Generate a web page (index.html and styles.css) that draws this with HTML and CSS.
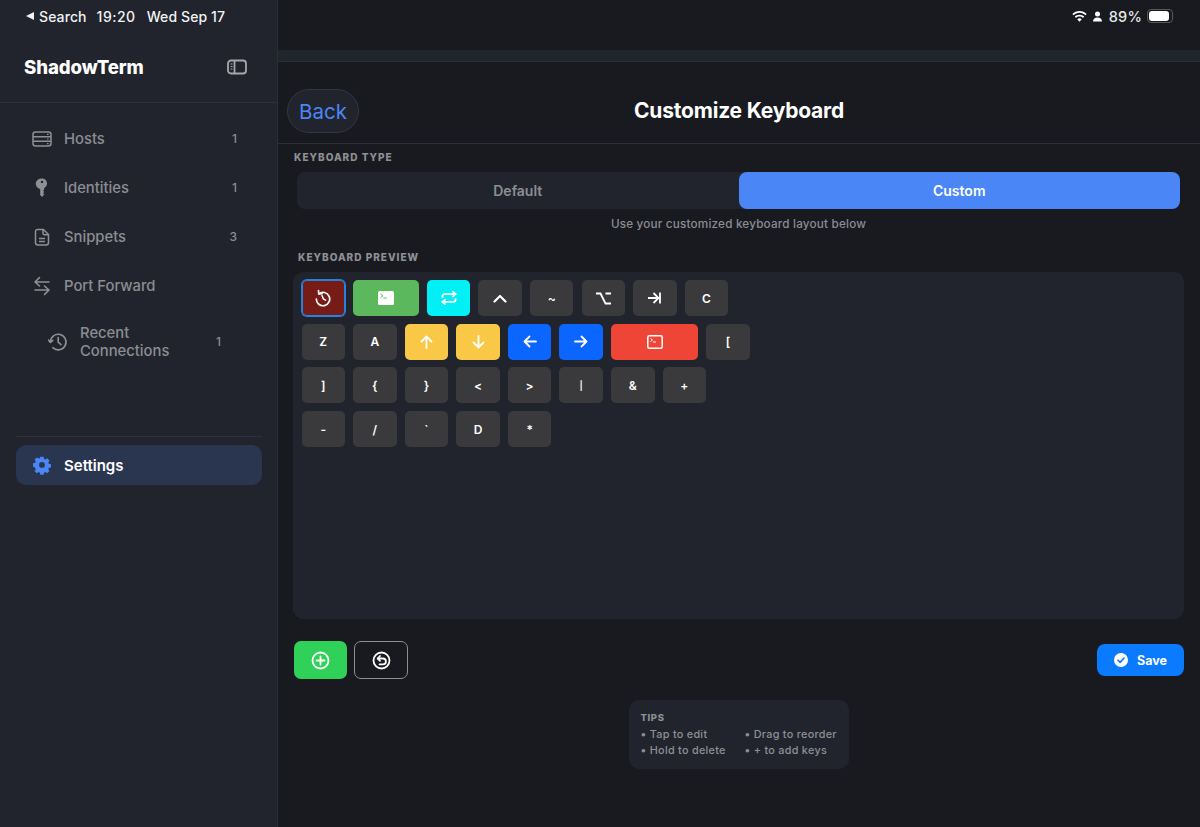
FILE: index.html
```html
<!DOCTYPE html>
<html lang="en">
<head>
  <meta charset="UTF-8" />
  <meta name="viewport" content="width=device-width, initial-scale=1.0" />
  <title>ShadowTerm - Customize Keyboard</title>
  <link rel="stylesheet" href="styles.css">
</head>
<body>
  <div class="app">
    <aside class="sidebar">
      <div class="status-left">
        <span class="back-tri"></span><span>Search</span><span class="clock">19:20</span><span>Wed Sep 17</span>
      </div>
      <div class="brand">
        <span class="brand-name">ShadowTerm</span>
        <svg class="brand-toggle" width="20" height="16" viewBox="0 0 20 16" fill="none" stroke="#a5a7ab" stroke-width="1.8">
          <rect x="1" y="1.5" width="18" height="13" rx="3"/>
          <path d="M7.5 1.5v13"/>
          <path d="M3.5 5h2M3.5 7.5h2M3.5 10h2" stroke-width="1.2"/>
        </svg>
      </div>

      <nav class="nav">
        <div class="nav-item">
          <svg class="nav-icon" width="20" height="20" viewBox="0 0 20 20" fill="none" stroke="#8e9094" stroke-width="1.5">
            <rect x="1" y="3" width="18" height="14" rx="2.5"/>
            <path d="M1 7.7h18M1 12.3h18"/>
            <path d="M15 5.4h1.6M15 10h1.6M15 14.7h1.6" stroke-width="1.2"/>
          </svg>
          <span class="nav-label">Hosts</span><span class="nav-count">1</span>
        </div>
        <div class="nav-item">
          <svg class="nav-icon" width="20" height="20" viewBox="0 0 20 20" fill="#8e9094">
            <path d="M10 0.5a5 5 0 0 1 2.2 9.5v1.6l-1.1 1.2 1.1 1.3-1.1 1.2 1.1 1.2-2.2 2.4-1.8-1.8v-6.1A5 5 0 0 1 10 0.5zm0 2.2a1.2 1.2 0 1 0 0 2.4 1.2 1.2 0 0 0 0-2.4z" fill-rule="evenodd"/>
          </svg>
          <span class="nav-label">Identities</span><span class="nav-count">1</span>
        </div>
        <div class="nav-item">
          <svg class="nav-icon" width="20" height="20" viewBox="0 0 20 20" fill="none" stroke="#8e9094" stroke-width="1.5" stroke-linejoin="round">
            <path d="M5.5 2.5h6l5 5v8a2.5 2.5 0 0 1-2.5 2.5H6a2.5 2.5 0 0 1-2.5-2.5v-11a2 2 0 0 1 2-2z"/>
            <path d="M11 2.8v3.4a1.5 1.5 0 0 0 1.5 1.5h3.7"/>
            <path d="M7 11.5h6M7 14.5h6" stroke-width="1.3"/>
          </svg>
          <span class="nav-label">Snippets</span><span class="nav-count">3</span>
        </div>
        <div class="nav-item">
          <svg class="nav-icon" width="20" height="20" viewBox="0 0 20 20" fill="none" stroke="#8e9094" stroke-width="1.6" stroke-linecap="round" stroke-linejoin="round">
            <path d="M17 6H3.5M7.5 1.5L3 6l4.5 4"/>
            <path d="M3 14h13.5M12.5 10l4.5 4-4.5 4.5"/>
          </svg>
          <span class="nav-label">Port Forward</span>
        </div>
        <div class="nav-item nav-recent">
          <svg class="nav-icon" width="20" height="20" viewBox="0 0 20 20" fill="none" stroke="#8e9094" stroke-width="1.6" stroke-linecap="round" stroke-linejoin="round">
            <path d="M2.4 10a7.8 7.8 0 1 1 2.4 5.7"/>
            <path d="M0.5 8l2 2.4L4.8 8.3"/>
            <path d="M10.2 5.5v4.7l2.8 2.4"/>
          </svg>
          <span class="nav-label">Recent Connections</span><span class="nav-count">1</span>
        </div>
      </nav>

      <div class="side-foot">
        <div class="nav-item nav-active">
          <svg class="nav-icon" width="20" height="20" viewBox="0 0 20 20">
            <path fill="#4a86f5" fill-rule="evenodd" d="M8.2 1h3.6l.5 2.4 1.4.6 2.1-1.3 2.5 2.5-1.3 2.1.6 1.4 2.4.5v3.6l-2.4.5-.6 1.4 1.3 2.1-2.5 2.5-2.1-1.3-1.4.6-.5 2.4H8.2l-.5-2.4-1.4-.6-2.1 1.3-2.5-2.5 1.3-2.1-.6-1.4L0 11.8V8.2l2.4-.5.6-1.4L1.7 4.2l2.5-2.5 2.1 1.3 1.4-.6zM10 6.8a3.2 3.2 0 1 0 0 6.4 3.2 3.2 0 0 0 0-6.4z" transform="translate(1 .9) scale(.9)"/>
          </svg>
          <span class="nav-label">Settings</span>
        </div>
      </div>
    </aside>

    <main class="main">
      <div class="status-right">
        <svg width="15" height="11" viewBox="0 0 15 11" fill="#fff">
          <path d="M7.5 0C4.7 0 2.2 1.1.4 2.9l1.2 1.3C3.1 2.7 5.2 1.8 7.5 1.8s4.4.9 5.9 2.4l1.2-1.3C12.8 1.1 10.3 0 7.5 0z"/>
          <path d="M7.5 3.7c-1.8 0-3.5.7-4.7 1.9l1.2 1.3c.9-.9 2.1-1.4 3.5-1.400s2.600.5 3.500 1.400l1.200-1.300c-1.200-1.200-2.900-1.900-4.700-1.900z"/>
          <path d="M7.5 7.3c-.9 0-1.700.4-2.300 1L7.5 10.800l2.300-2.500c-.6-.6-1.400-1-2.300-1z"/>
        </svg>
        <svg width="11" height="11" viewBox="0 0 11 11" fill="#fff">
          <circle cx="5.5" cy="3" r="2.5"/>
          <path d="M1 10.5c0-2.500 2-4 4.500-4s4.500 1.500 4.500 4z"/>
        </svg>
        <span class="battery-pct">89%</span>
        <span class="battery"><span class="battery-fill"></span></span>
      </div>
      <div class="band"></div>

      <header class="page-head">
        <button class="back-btn">Back</button>
        <h1>Customize Keyboard</h1>
      </header>

      <section class="content">
        <div class="section-label">KEYBOARD TYPE</div>
        <div class="segment">
          <div class="seg-item">Default</div>
          <div class="seg-item seg-on">Custom</div>
        </div>
        <p class="hint">Use your customized keyboard layout below</p>

        <div class="section-label label-preview">KEYBOARD PREVIEW</div>
        <div class="preview">
          <div class="key-row">
            <div class="key key-undo">
              <svg width="18" height="18" viewBox="0 0 18 18" fill="none" stroke="#fff" stroke-width="1.7" stroke-linecap="round" stroke-linejoin="round">
                <path d="M4.8 4.800A6.700 6.700 0 1 1 2.300 10"/>
                <path d="M4.500 1.500l.3 3.300 3.200-.2"/>
                <path d="M8 6.500l1.300 3.300 2.300 1.400" stroke-width="1.5"/>
              </svg>
            </div>
            <div class="key key-wide key-green">
              <svg width="16" height="14" viewBox="0 0 16 14">
                <rect x="0" y="0" width="16" height="14" rx="1.5" fill="#fff"/>
                <path d="M2.500 3l2.500 1.800L2.500 6.600" fill="none" stroke="#5cb85c" stroke-width="1"/>
                <path d="M5.500 7h3" stroke="#5cb85c" stroke-width="1"/>
              </svg>
            </div>
            <div class="key key-cyan">
              <svg width="16" height="14" viewBox="0 0 18 16" fill="none" stroke="#fff" stroke-width="2" stroke-linecap="round" stroke-linejoin="round">
                <path d="M1.500 7V6a2.500 2.500 0 0 1 2.500-2.500h12.500"/>
                <path d="M13.500 .8l3 2.700-3 2.700"/>
                <path d="M16.500 9v1a2.500 2.500 0 0 1-2.500 2.500H1.500"/>
                <path d="M4.500 9.800l-3 2.700 3 2.700"/>
              </svg>
            </div>
            <div class="key">
              <svg width="14" height="9" viewBox="0 0 14 9" fill="none" stroke="#fff" stroke-width="2.2" stroke-linecap="round" stroke-linejoin="round"><path d="M1.500 7.500L7 2l5.500 5.500"/></svg>
            </div>
            <div class="key">~</div>
            <div class="key">
              <svg width="15" height="13" viewBox="0 0 15 13" fill="none" stroke="#fff" stroke-width="1.8"><path d="M0 1.500h4.500l5 10H15M9.500 1.500H15"/></svg>
            </div>
            <div class="key">
              <svg width="13" height="12" viewBox="0 0 13 12" fill="none" stroke="#fff" stroke-width="1.8"><path d="M0 6h10M5.500 1l5 5-5 5M12 0.500v11"/></svg>
            </div>
            <div class="key">C</div>
          </div>
          <div class="key-row">
            <div class="key">Z</div>
            <div class="key">A</div>
            <div class="key key-yellow">
              <svg width="13" height="14" viewBox="0 0 13 14" fill="none" stroke="#fff" stroke-width="1.8" stroke-linecap="round" stroke-linejoin="round"><path d="M6.500 13V1.500M1.500 6.500l5-5 5 5"/></svg>
            </div>
            <div class="key key-yellow">
              <svg width="13" height="14" viewBox="0 0 13 14" fill="none" stroke="#fff" stroke-width="1.8" stroke-linecap="round" stroke-linejoin="round"><path d="M6.500 1v11.500M1.500 7.500l5 5 5-5"/></svg>
            </div>
            <div class="key key-blue">
              <svg width="14" height="13" viewBox="0 0 14 13" fill="none" stroke="#fff" stroke-width="1.8" stroke-linecap="round" stroke-linejoin="round"><path d="M13 6.500H1.500M6.500 1.500l-5 5 5 5"/></svg>
            </div>
            <div class="key key-blue">
              <svg width="14" height="13" viewBox="0 0 14 13" fill="none" stroke="#fff" stroke-width="1.8" stroke-linecap="round" stroke-linejoin="round"><path d="M1 6.500h11.500M7.500 1.500l5 5-5 5"/></svg>
            </div>
            <div class="key key-red">
              <svg width="16" height="14" viewBox="0 0 16 14" fill="none" stroke="#fff">
                <rect x=".8" y=".8" width="14.4" height="12.4" rx="1.5" stroke-width="1.5"/>
                <path d="M3.500 3.500l2 1.500-2 1.500M6 7h3" stroke-width="1"/>
              </svg>
            </div>
            <div class="key">[</div>
          </div>
          <div class="key-row">
            <div class="key">]</div>
            <div class="key">{</div>
            <div class="key">}</div>
            <div class="key">&lt;</div>
            <div class="key">&gt;</div>
            <div class="key key-pipe">|</div>
            <div class="key">&amp;</div>
            <div class="key">+</div>
          </div>
          <div class="key-row">
            <div class="key">-</div>
            <div class="key">/</div>
            <div class="key">`</div>
            <div class="key">D</div>
            <div class="key">*</div>
          </div>
        </div>

        <div class="actions">
          <button class="act-btn act-add">
            <svg width="19" height="19" viewBox="0 0 19 19" fill="none" stroke="#fff" stroke-width="1.8" stroke-linecap="round"><circle cx="9.5" cy="9.5" r="8"/><path d="M9.500 5.500v8M5.500 9.500h8"/></svg>
          </button>
          <button class="act-btn act-reset">
            <svg width="19" height="19" viewBox="0 0 19 19" fill="none" stroke="#fff" stroke-width="1.8" stroke-linecap="round" stroke-linejoin="round"><circle cx="9.5" cy="9.5" r="8"/><path d="M6 7.500h5a2.900 2.900 0 0 1 0 5.800H7.500"/><path d="M8 5L5.700 7.500 8 9.800"/></svg>
          </button>
          <button class="save-btn">
            <svg width="14" height="14" viewBox="0 0 14 14"><circle cx="7" cy="7" r="7" fill="#fff"/><path d="M4 7.300l2.100 2.100L10 5" fill="none" stroke="#0a7aff" stroke-width="1.6" stroke-linecap="round" stroke-linejoin="round"/></svg>
            Save
          </button>
        </div>

        <div class="tips">
          <div class="tips-title">TIPS</div>
          <div class="tips-grid">
            <span>• Tap to edit</span><span>• Drag to reorder</span>
            <span>• Hold to delete</span><span>• + to add keys</span>
          </div>
        </div>
      </section>
    </main>
  </div>
</body>
</html>
```

FILE: styles.css
```css
*{box-sizing:border-box}
html,body{margin:0;height:100%}
body{font-family:Inter,"Liberation Sans",sans-serif;background:#181a20;color:#fff;overflow:hidden}
button{font-family:inherit;cursor:pointer}

.app{display:flex;height:827px}

.sidebar{width:278px;flex:none;background:#21242d;border-right:1px solid #2b2e36;display:flex;flex-direction:column}
.status-left{height:32px;padding:0 0 0 26px;display:flex;align-items:center;font-size:14px;font-weight:500;color:#f2f2f3;letter-spacing:.1px}
.back-tri{width:0;height:0;border-top:4px solid transparent;border-bottom:4px solid transparent;border-right:8px solid #f2f2f3;margin-right:5px}
.clock{margin:0 11px 0 10px;letter-spacing:.5px}
.brand{height:71px;padding:0 30px 0 24px;display:flex;align-items:center;justify-content:space-between;border-bottom:1px solid #2d3039}
.brand-name{font-size:18.6px;font-weight:800;letter-spacing:-.1px}
.brand-toggle{display:block}

.nav{height:333px;padding-top:11px}
.nav-item{height:49px;margin:0 16px;padding:0 24px 0 16px;display:flex;align-items:center;font-size:14.8px;font-weight:500;color:#8b8d92}
.nav-icon{flex:none;margin-right:12px}
.nav-label{flex:1}
.nav-count{font-size:12px;color:#8b8d92}
.nav-recent{height:56px;margin:4px 32px 0;line-height:18px}

.side-foot{margin:0 15px 0 16px;border-top:1px solid #2d3039;padding-top:8px}
.nav-active{margin:0;height:40px;background:#2a3550;border-radius:10px;color:#fff;font-size:15px;font-weight:600}

.main{flex:1;min-width:0;display:flex;flex-direction:column}
.status-right{height:32px;padding:0 27px 0 0;display:flex;align-items:center;justify-content:flex-end;gap:5px}
.battery-pct{font-size:14.5px;font-weight:500;color:#e8e8ea;letter-spacing:.2px;margin-left:1px}
.battery{width:26px;height:14px;border:1px solid #55575b;border-radius:4px;padding:1px}
.battery-fill{display:block;width:92%;height:100%;background:#fff;border-radius:3px}
.band{height:12px;margin-top:18px;background:#21252e;border-bottom:1px solid #2d3039}

.page-head{height:82px;position:relative;display:flex;align-items:center;justify-content:center;border-bottom:1px solid #2d2f36;padding-top:16px}
.page-head h1{margin:0;font-size:21px;font-weight:700;letter-spacing:-.2px}
.back-btn{position:absolute;left:9px;top:27px;width:72px;height:44px;border-radius:22px;border:1px solid #33363f;background:#21242d;color:#4a86f5;font-size:20.5px;padding:0}

.content{padding:0 16px 0 15px;display:flex;flex-direction:column}
.section-label{font-size:10px;font-weight:800;letter-spacing:1px;color:#8e9094;margin:7px 0 0 1px;line-height:12px}
.label-preview{margin:20px 0 0 5px}

.segment{display:flex;height:37px;margin:9px 4px 0 4px;background:#21242d;border-radius:8px}
.seg-item{flex:1;display:flex;align-items:center;justify-content:center;font-size:14px;font-weight:600;color:#8b8d92;border-radius:8px}
.seg-on{background:#4a86f5;color:#fff}
.hint{margin:8px 0 0;text-align:center;font-size:11.7px;font-weight:500;color:#8b8d92;letter-spacing:.2px;line-height:14px}

.preview{height:347px;margin-top:9px;background:#21242d;border-radius:10px;padding:8px 8.5px;display:flex;flex-direction:column;gap:7.7px}
.key-row{display:flex;gap:8.1px}
.key{width:43.5px;height:36px;flex:none;background:#3a3a3c;border-radius:5px;display:flex;align-items:center;justify-content:center;font-size:12px;font-weight:600;color:#fff}
.key-pipe{font-size:9px}
.key-undo{background:#761b16;box-shadow:0 0 0 1px #2383de,inset 0 0 0 1px #2383de}
.key-wide{width:65.6px}
.key-green{background:#5cb85c}
.key-cyan{background:#00f0f5}
.key-yellow{background:#f9c846}
.key-blue{background:#0a66ff}
.key-red{width:87.2px;background:#ee4537}

.actions{display:flex;align-items:center;margin-top:22px;height:38px;padding-left:1px}
.act-btn{height:38px;border-radius:7px;display:flex;align-items:center;justify-content:center;padding:0;border:none}
.act-add{width:53px;background:#30d158}
.act-reset{width:54px;margin-left:7px;background:transparent;border:1px solid #8e8e92}
.save-btn{margin-left:auto;width:87px;height:32px;background:#0a7aff;border:none;border-radius:8px;color:#fff;font-size:12.5px;font-weight:700;display:flex;align-items:center;justify-content:center;gap:9px;padding:0}

.tips{align-self:center;width:220px;height:69px;margin:21px 0 0 0;background:#21242d;border-radius:10px;padding:12px 8px 0 12px}
.tips-title{font-size:9.5px;font-weight:800;letter-spacing:.6px;color:#8e9094;line-height:12px}
.tips-grid{display:grid;grid-template-columns:104px 1fr;white-space:nowrap;font-size:10.8px;font-weight:500;letter-spacing:.3px;color:#8e9094;line-height:15.5px;margin-top:3px}
```
